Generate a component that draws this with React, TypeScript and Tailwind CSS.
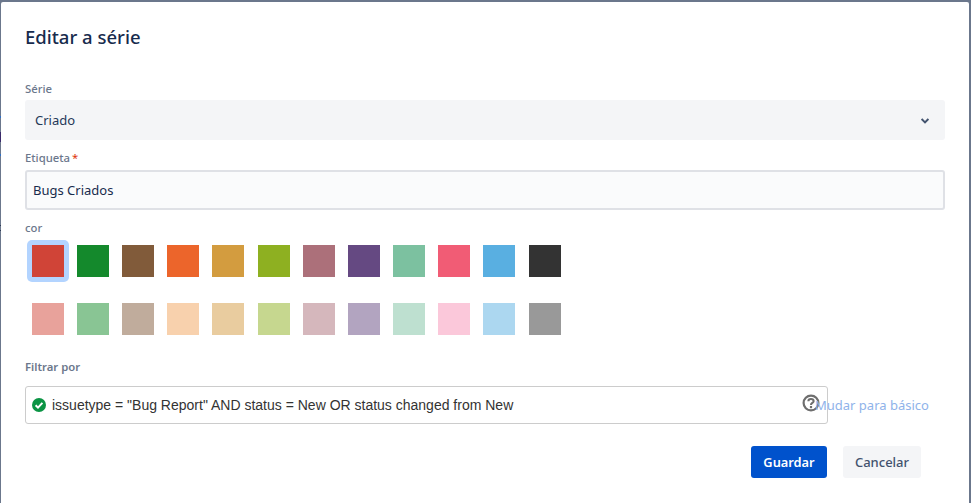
const row1 = ["#d04437", "#14892c", "#815b3a", "#ec652b", "#d39c3f", "#8eb021", "#ac707a", "#654982", "#7cc1a0", "#f15c75", "#59afe1", "#333333"];
const row2 = ["#e8a29b", "#89c594", "#c0ac9c", "#f8d1ad", "#e9cc9f", "#c6d78f", "#d5b7bc", "#b2a4c0", "#bee0d0", "#fbc8da", "#acd7f0", "#999999"];

function Swatches({ colors, selected }: { colors: string[]; selected?: number }) {
  return (
    <div className="flex gap-[3.19px] ml-[1.6px]">
      {colors.map((c, i) => (
        <div
          key={c}
          className={`w-[42px] h-[42px] p-[5px] rounded-[5px] ${i === selected ? "bg-[#b3d4ff]" : ""}`}
        >
          <div className="w-full h-full" style={{ backgroundColor: c }} />
        </div>
      ))}
    </div>
  );
}

export default function App() {
  return (
    <div className="relative w-[971px] h-[503px] overflow-hidden bg-[#6b778c] pt-[2px] pl-[1px] pr-[2px]">
      <div className="h-[501px] rounded-t-[2px] bg-white pl-[24px] pr-[24px] font-['Noto_Sans',sans-serif]">
        <h1 className="h-[70px] pt-[21px] text-[18.5px] leading-[28px] font-medium text-[#172b4d]">Editar a série</h1>
        <label className="block h-[28px] pt-[9px] text-[11.3px] leading-[16px] font-medium text-[#6b778c]">Série</label>
        <div className="h-[40px] w-[920px] rounded-[3px] bg-[#f4f5f7] flex items-center justify-between pl-[10px] pr-[16px] pt-[1px] text-[13px] text-[#253858]">
          <span>Criado</span>
          <svg width="8" height="6" viewBox="0 0 8 6" fill="none">
            <path d="M0.6 1 L4 4.4 L7.4 1" stroke="#42526e" strokeWidth="2" />
          </svg>
        </div>
        <label className="block h-[30px] pt-[10px] text-[11.3px] leading-[16px] font-medium text-[#6b778c]">
          Etiqueta<span className="text-[#de350b] ml-[2px] font-normal">*</span>
        </label>
        <div className="h-[40px] w-[920px] rounded-[3px] border-2 border-[#dfe1e6] bg-[#fafbfc] flex items-center pl-[6px] pt-[2px] text-[13px] text-[#172b4d]">
          Bugs Criados
        </div>
        <label className="block h-[30px] pt-[10px] text-[11.3px] leading-[16px] font-medium text-[#6b778c]">cor</label>
        <Swatches colors={row1} selected={0} />
        <div className="mt-[16px]">
          <Swatches colors={row2} />
        </div>
        <label className="block h-[46px] pt-[19px] text-[11.3px] leading-[16px] font-semibold text-[#6b778c]">Filtrar por</label>
        <div className="flex items-center">
          <div className="relative h-[38px] w-[803px] shrink-0 rounded-[3px] border border-[#cccccc] bg-white flex items-center pl-[6px] gap-[6px] font-['Liberation_Sans',sans-serif] text-[14px] text-[#333333]">
            <svg width="14" height="14" viewBox="0 0 14 14">
              <circle cx="7" cy="7" r="7" fill="#0b9444" />
              <path d="M3.6 7.2 L6 9.6 L10.4 4.9" fill="none" stroke="#fff" strokeWidth="2" />
            </svg>
            <span>issuetype = "Bug Report" AND status = New OR status changed from New</span>
            <svg className="absolute left-[776px] top-[7px]" width="18" height="18" viewBox="0 0 18 18" fill="none">
              <circle cx="9" cy="9" r="7.4" stroke="#6e6e6e" strokeWidth="2.2" />
              <path d="M6.4 7.2 C6.4 4.2 11.6 4.2 11.6 7.2 C11.6 9 9 8.9 9 10.9" stroke="#6e6e6e" strokeWidth="2.1" />
              <rect x="7.9" y="12" width="2.2" height="2.2" fill="#6e6e6e" />
            </svg>
          </div>
          <span className="relative -ml-[13px] pt-[2px] text-[13px] text-[#8fb3ea] whitespace-nowrap">Mudar para básico</span>
        </div>
        <div className="mt-[22px] flex justify-end gap-[16px] pr-[24px]">
          <button className="h-[32px] w-[76px] rounded-[3px] bg-[#0052cc] pt-[1px] text-white text-[12.8px] font-semibold">Guardar</button>
          <button className="h-[32px] w-[78px] rounded-[3px] bg-[#f4f5f7] pt-[1px] text-[#42526e] text-[13px] font-medium">Cancelar</button>
        </div>
      </div>
      <span className="absolute left-0 top-[116px] w-[1px] h-[2px] bg-[#2f6fc4]" />
      <span className="absolute left-0 top-[132px] w-[1px] h-[10px] bg-[#3a2a6b]" />
      <span className="absolute left-0 top-[154px] w-[1px] h-[2px] bg-[#2f6fc4]" />
      <span className="absolute left-0 top-[225px] w-[1px] h-[1px] bg-[#2c3a55]" />
      <span className="absolute left-0 top-[230px] w-[1px] h-[1px] bg-[#2c3a55]" />
    </div>
  );
}
